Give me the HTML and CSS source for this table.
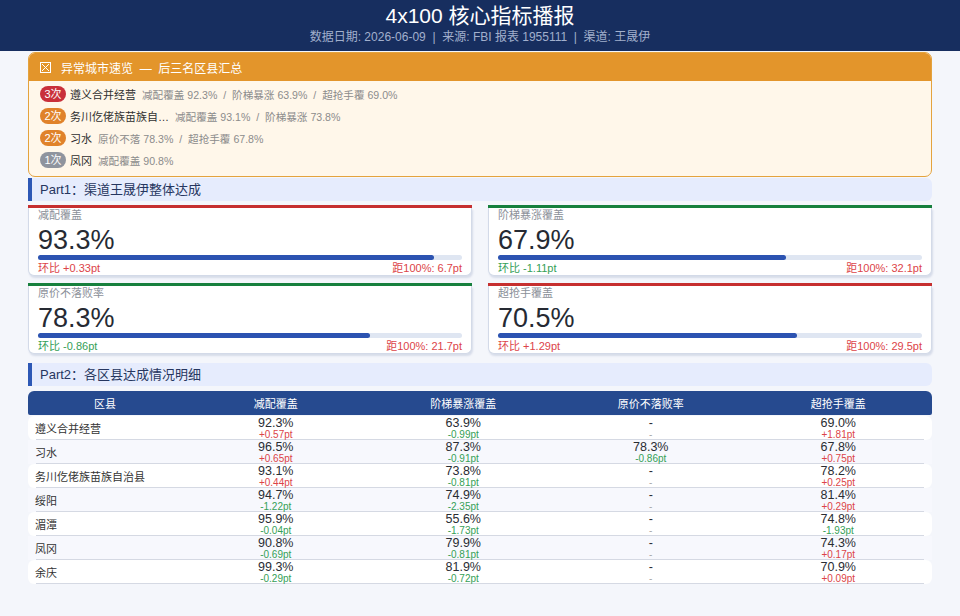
FILE: index.html
```html
<!DOCTYPE html>
<html lang="zh-CN">
<head>
<meta charset="utf-8">
<title>4x100 核心指标播报</title>
<link rel="stylesheet" href="styles.css">
</head>
<body>
<header class="top">
  <h1 class="title">4x100 核心指标播报</h1>
  <div class="sub">数据日期: 2026-06-09 &nbsp;|&nbsp; 来源: FBI 报表 1955111 &nbsp;|&nbsp; 渠道: 王晟伊</div>
</header>
<main class="wrap">
  <section class="alert">
    <div class="alert-head">
      <svg class="alert-icon" width="11" height="11" viewBox="0 0 11 11"><rect x="0.5" y="0.5" width="10" height="10" fill="none" stroke="#fff" stroke-width="1"/><path d="M2 2L9 9M9 2L2 9" stroke="#fff" stroke-width="1"/></svg>
      <span>异常城市速览 &nbsp;—&nbsp; 后三名区县汇总</span>
    </div>
    <ul class="alert-list">
      <li><span class="badge b-red">3次</span><span class="city">遵义合并经营</span><span class="detail">减配覆盖 92.3% &nbsp;/&nbsp; 阶梯暴涨 63.9% &nbsp;/&nbsp; 超抢手覆 69.0%</span></li>
      <li><span class="badge b-orange">2次</span><span class="city">务川仡佬族苗族自…</span><span class="detail">减配覆盖 93.1% &nbsp;/&nbsp; 阶梯暴涨 73.8%</span></li>
      <li><span class="badge b-orange">2次</span><span class="city">习水</span><span class="detail">原价不落 78.3% &nbsp;/&nbsp; 超抢手覆 67.8%</span></li>
      <li><span class="badge b-gray">1次</span><span class="city">凤冈</span><span class="detail">减配覆盖 90.8%</span></li>
    </ul>
  </section>

  <h2 class="part">Part1：渠道王晟伊整体达成</h2>
  <div class="kpis">
    <div class="kpi top-red">
      <div class="kpi-body">
        <div class="kpi-label">减配覆盖</div>
        <div class="kpi-value">93.3%</div>
        <div class="bar"><div class="fill" style="width:93.3%"></div></div>
        <div class="kpi-foot"><span class="up">环比 +0.33pt</span><span class="up">距100%: 6.7pt</span></div>
      </div>
    </div>
    <div class="kpi top-green">
      <div class="kpi-body">
        <div class="kpi-label">阶梯暴涨覆盖</div>
        <div class="kpi-value">67.9%</div>
        <div class="bar"><div class="fill" style="width:67.9%"></div></div>
        <div class="kpi-foot"><span class="down">环比 -1.11pt</span><span class="up">距100%: 32.1pt</span></div>
      </div>
    </div>
    <div class="kpi top-green">
      <div class="kpi-body">
        <div class="kpi-label">原价不落败率</div>
        <div class="kpi-value">78.3%</div>
        <div class="bar"><div class="fill" style="width:78.3%"></div></div>
        <div class="kpi-foot"><span class="down">环比 -0.86pt</span><span class="up">距100%: 21.7pt</span></div>
      </div>
    </div>
    <div class="kpi top-red">
      <div class="kpi-body">
        <div class="kpi-label">超抢手覆盖</div>
        <div class="kpi-value">70.5%</div>
        <div class="bar"><div class="fill" style="width:70.5%"></div></div>
        <div class="kpi-foot"><span class="up">环比 +1.29pt</span><span class="up">距100%: 29.5pt</span></div>
      </div>
    </div>
  </div>

  <h2 class="part">Part2：各区县达成情况明细</h2>
  <div class="table">
    <div class="row thead">
      <div>区县</div><div>减配覆盖</div><div>阶梯暴涨覆盖</div><div>原价不落败率</div><div>超抢手覆盖</div>
    </div>
    <div class="row odd">
      <div class="name">遵义合并经营</div>
      <div class="cell"><span class="v">92.3%</span><span class="d up">+0.57pt</span></div>
      <div class="cell"><span class="v">63.9%</span><span class="d down">-0.99pt</span></div>
      <div class="cell"><span class="v">-</span><span class="d na">-</span></div>
      <div class="cell"><span class="v">69.0%</span><span class="d up">+1.81pt</span></div>
    </div>
    <div class="row even">
      <div class="name">习水</div>
      <div class="cell"><span class="v">96.5%</span><span class="d up">+0.65pt</span></div>
      <div class="cell"><span class="v">87.3%</span><span class="d down">-0.91pt</span></div>
      <div class="cell"><span class="v">78.3%</span><span class="d down">-0.86pt</span></div>
      <div class="cell"><span class="v">67.8%</span><span class="d up">+0.75pt</span></div>
    </div>
    <div class="row odd">
      <div class="name">务川仡佬族苗族自治县</div>
      <div class="cell"><span class="v">93.1%</span><span class="d up">+0.44pt</span></div>
      <div class="cell"><span class="v">73.8%</span><span class="d down">-0.81pt</span></div>
      <div class="cell"><span class="v">-</span><span class="d na">-</span></div>
      <div class="cell"><span class="v">78.2%</span><span class="d up">+0.25pt</span></div>
    </div>
    <div class="row even">
      <div class="name">绥阳</div>
      <div class="cell"><span class="v">94.7%</span><span class="d down">-1.22pt</span></div>
      <div class="cell"><span class="v">74.9%</span><span class="d down">-2.35pt</span></div>
      <div class="cell"><span class="v">-</span><span class="d na">-</span></div>
      <div class="cell"><span class="v">81.4%</span><span class="d up">+0.29pt</span></div>
    </div>
    <div class="row odd">
      <div class="name">湄潭</div>
      <div class="cell"><span class="v">95.9%</span><span class="d down">-0.04pt</span></div>
      <div class="cell"><span class="v">55.6%</span><span class="d down">-1.73pt</span></div>
      <div class="cell"><span class="v">-</span><span class="d na">-</span></div>
      <div class="cell"><span class="v">74.8%</span><span class="d down">-1.93pt</span></div>
    </div>
    <div class="row even">
      <div class="name">凤冈</div>
      <div class="cell"><span class="v">90.8%</span><span class="d down">-0.69pt</span></div>
      <div class="cell"><span class="v">79.9%</span><span class="d down">-0.81pt</span></div>
      <div class="cell"><span class="v">-</span><span class="d na">-</span></div>
      <div class="cell"><span class="v">74.3%</span><span class="d up">+0.17pt</span></div>
    </div>
    <div class="row odd">
      <div class="name">余庆</div>
      <div class="cell"><span class="v">99.3%</span><span class="d down">-0.29pt</span></div>
      <div class="cell"><span class="v">81.9%</span><span class="d down">-0.72pt</span></div>
      <div class="cell"><span class="v">-</span><span class="d na">-</span></div>
      <div class="cell"><span class="v">70.9%</span><span class="d up">+0.09pt</span></div>
    </div>
  </div>
</main>
</body>
</html>
```

FILE: styles.css
```css
* { box-sizing: border-box; }
html, body { margin: 0; padding: 0; }
body {
  background: #f4f6fb;
  font-family: "Liberation Sans", "Noto Sans CJK SC", sans-serif;
  color: #333;
}

.top {
  background: #172e5f;
  height: 51px;
  padding-top: 3px;
  text-align: center;
}
.title {
  margin: 0;
  font-size: 21px;
  line-height: 25px;
  font-weight: 400;
  color: #fff;
}
.sub {
  margin-top: 2px;
  font-size: 12px;
  line-height: 14px;
  color: #a2b0cd;
}

.wrap {
  padding: 1px 28px 0;
}

/* alert */
.alert {
  border: 1px solid #e4a33e;
  border-radius: 7px;
  background: #fff7ea;
  overflow: hidden;
}
.alert-head {
  background: #e3952b;
  height: 28px;
  display: flex;
  align-items: center;
  gap: 10px;
  padding-left: 11px;
  color: #fff;
  font-size: 12px;
}
.alert-icon { display: block; }
.alert-list {
  list-style: none;
  margin: 0;
  padding: 2px 11px 5px;
}
.alert-list li {
  height: 22px;
  display: flex;
  align-items: center;
}
.badge {
  width: 26px;
  height: 16px;
  border-radius: 8px;
  color: #fff;
  font-size: 11px;
  line-height: 16px;
  text-align: center;
  margin-right: 4px;
}
.b-red { background: #c9303a; }
.b-orange { background: #e0822a; }
.b-gray { background: #8f949e; }
.city {
  font-size: 11px;
  color: #2f2f2f;
  margin-right: 6px;
}
.detail {
  font-size: 10.6px;
  color: #8c8c8c;
}

/* part titles */
.part {
  margin: 1px 0 0;
  height: 23px;
  background: #e6ecfd;
  border-left: 4px solid #2d58b5;
  border-radius: 0 6px 6px 0;
  padding-left: 8px;
  font-size: 13px;
  line-height: 23px;
  font-weight: 400;
  color: #26365f;
}
.kpis + .part { margin-top: 9px; }

/* kpi cards */
.kpis {
  margin-top: 4px;
  display: grid;
  grid-template-columns: 1fr 1fr;
  column-gap: 16px;
  row-gap: 7px;
}
.kpi {
  border-top: 3px solid #c62f2f;
}
.kpi.top-green { border-top-color: #17803d; }
.kpi-body {
  background: #fff;
  border: 1px solid #d3dae8;
  border-top: 0;
  border-radius: 0 0 6px 6px;
  box-shadow: 1px 2px 2px rgba(60, 85, 140, 0.16);
  padding: 0 9px 0;
  height: 68px;
}
.kpi-label {
  font-size: 11px;
  line-height: 15px;
  color: #8b9099;
}
.kpi-value {
  font-size: 27px;
  line-height: 30px;
  padding-top: 2px;
  height: 32px;
  color: #262a33;
}
.bar {
  height: 5px;
  border-radius: 3px;
  background: #dfe6f2;
}
.fill {
  height: 100%;
  border-radius: 3px;
  background: #2c53b1;
}
.kpi-foot {
  margin-top: 1px;
  display: flex;
  justify-content: space-between;
  font-size: 11px;
  line-height: 14px;
}
.up { color: #dc4448; }
.down { color: #35a057; }
.na { color: #a8a8a8; }

/* table */
.table {
  margin-top: 5px;
}
.row {
  display: grid;
  grid-template-columns: 154px repeat(4, 1fr);
  height: 24px;
}
.thead {
  background: #264a8f;
  border-radius: 6px 6px 2px 2px;
  color: #fff;
  font-size: 11px;
  align-items: center;
  text-align: center;
  margin-bottom: 1px;
}
.odd {
  background: linear-gradient(#d5d9e3, #d5d9e3) no-repeat center bottom / calc(100% - 16px) 1px, #fff;
  border-radius: 6px;
}
.even {
  background: linear-gradient(#d5d9e3, #d5d9e3) no-repeat center bottom / calc(100% - 16px) 1px, #f7f8fd;
}
.name {
  padding-left: 7px;
  font-size: 11px;
  color: #333;
  display: flex;
  align-items: center;
}
.cell {
  display: flex;
  flex-direction: column;
  align-items: center;
}
.v {
  font-size: 12.5px;
  line-height: 14px;
  color: #2a2d33;
}
.d {
  font-size: 10px;
  line-height: 10px;
}
```
